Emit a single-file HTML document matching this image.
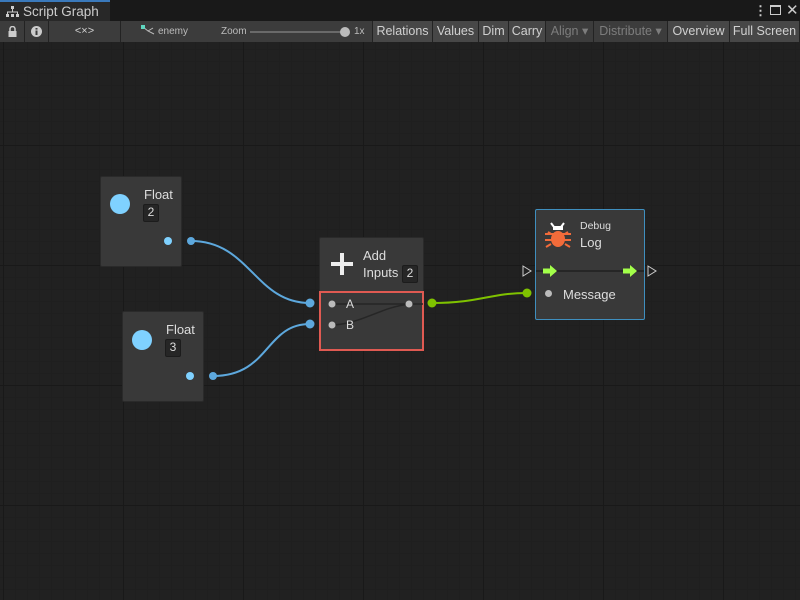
<!DOCTYPE html>
<html><head><meta charset="utf-8"><style>
*{margin:0;padding:0;box-sizing:border-box}
body{width:800px;height:600px;overflow:hidden;background:#212121;font-family:"Liberation Sans",sans-serif;position:relative;color:#ddd}
.tabbar{position:absolute;left:0;top:0;width:800px;height:21px;background:#191919}
.tab{position:absolute;left:0;top:0;width:110px;height:21px;background:#282828;border-top:2px solid #3a79bb;font-size:13.5px;color:#ccc;padding:2px 0 0 23px}
.toolbar{position:absolute;left:0;top:21px;width:800px;height:21px;background:#3c3c3c;border-bottom:1px solid #232323}
.tb{position:absolute;top:0;height:21px;border-right:1px solid #232323;font-size:12.5px;color:#d0d0d0;line-height:21px;text-align:center;background:#3c3c3c}
.tb span{position:absolute;top:0;line-height:21px}
.btn{background:#474747}
.dis{color:#7d7d7d}
.grid{position:absolute;left:0;top:42px;width:800px;height:558px;
background-image:linear-gradient(#191919 1px,transparent 1px),linear-gradient(90deg,#191919 1px,transparent 1px),linear-gradient(#1f1f1f 1px,transparent 1px),linear-gradient(90deg,#1f1f1f 1px,transparent 1px);
background-size:120px 120px,120px 120px,12px 12px,12px 12px;background-position:0 103px,3px 0,0 7px,3px 0}
.node{position:absolute;background:#393939;border:1px solid #2a2a2a;border-radius:2px}
.t{position:absolute;font-size:13px;color:#ddd}
.box{position:absolute;background:#262626;border:1px solid #1c1c1c;border-radius:2px;font-size:12px;color:#ddd;text-align:center;line-height:15px}
</style></head><body>
<div class="grid"></div>
<div class="tabbar">
<div class="tab">Script Graph</div>
<svg style="position:absolute;left:6px;top:6px" width="13" height="11"><rect x="5" y="0" width="3" height="3" fill="#ccc"/><path d="M6.5 3v3M1.5 9V6h10v3" stroke="#ccc" fill="none"/><rect x="0" y="8" width="3" height="3" fill="#ccc"/><rect x="5" y="8" width="3" height="3" fill="#ccc"/><rect x="10" y="8" width="3" height="3" fill="#ccc"/></svg>
<div style="position:absolute;left:754px;top:3px;color:#ccc;font-size:13px;font-weight:bold">⋮</div>
<div style="position:absolute;left:770px;top:5px;width:11px;height:10px;border:1.5px solid #ccc;border-top-width:2.5px"></div>
<div style="position:absolute;left:786px;top:1px;color:#ccc;font-size:15px">✕</div>
</div>
<div class="toolbar">
<div class="tb" style="left:0;width:25px"><svg width="9" height="11" style="margin-top:5px"><path d="M2 5V3a2.5 2.5 0 0 1 5 0v2" stroke="#ccc" fill="none" stroke-width="1.5"/><rect x="0.5" y="5" width="8" height="6" fill="#ccc"/></svg></div>
<div class="tb" style="left:25px;width:24px"><svg width="11" height="11" style="margin-top:5px"><circle cx="5.5" cy="5.5" r="5.5" fill="#ccc"/><rect x="4.5" y="4.5" width="2" height="4.5" fill="#3c3c3c"/><rect x="4.5" y="2" width="2" height="1.6" fill="#3c3c3c"/></svg></div>
<div class="tb" style="left:49px;width:72px;font-size:11px">&lt;×&gt;</div>
<div class="tb" style="left:121px;width:252px;text-align:left;font-size:10px;color:#bbb">
<svg style="position:absolute;left:20px;top:4px" width="14" height="12"><path d="M2 2L7 6L13 9M7 6L12 3" stroke="#bbb" fill="none"/><rect x="0" y="0" width="4" height="4" fill="#5fd6c0"/></svg>
<span style="left:37px">enemy</span><span style="left:100px">Zoom</span>
<div style="position:absolute;left:129px;top:10px;width:96px;height:2px;background:#6a6a6a"></div>
<div style="position:absolute;left:219px;top:6px;width:10px;height:10px;border-radius:50%;background:#bbb"></div>
<span style="left:233px">1x</span></div>
<div class="tb btn" style="left:373px;width:60px">Relations</div>
<div class="tb btn" style="left:433px;width:46px">Values</div>
<div class="tb btn" style="left:479px;width:30px">Dim</div>
<div class="tb btn" style="left:509px;width:37px">Carry</div>
<div class="tb dis" style="left:546px;width:48px">Align ▾</div>
<div class="tb dis" style="left:594px;width:74px">Distribute ▾</div>
<div class="tb btn" style="left:668px;width:62px">Overview</div>
<div class="tb btn" style="left:730px;width:70px">Full Screen</div>
</div>

<svg style="position:absolute;left:0;top:0" width="800" height="600">
<path d="M191 241C250 241 255 303 310 303" stroke="#5da8dd" stroke-width="2" fill="none"/>
<path d="M213 376C270 376 265 324 310 324" stroke="#5da8dd" stroke-width="2" fill="none"/>
<path d="M432 303C480 303 490 293 527 293" stroke="#7fc200" stroke-width="2" fill="none"/>
<circle cx="191" cy="241" r="4" fill="#5da8dd"/><circle cx="213" cy="376" r="4" fill="#5da8dd"/>
<circle cx="310" cy="303" r="4.5" fill="#5da8dd"/><circle cx="310" cy="324" r="4.5" fill="#5da8dd"/>
<circle cx="432" cy="303" r="4.5" fill="#7fc200"/><circle cx="527" cy="293" r="4.5" fill="#7fc200"/>
<path d="M523 266l8 5l-8 5z M648 266l8 5l-8 5z" stroke="#ccc" fill="none"/>
</svg>

<div class="node" style="left:100px;top:176px;width:82px;height:91px">
<div style="position:absolute;left:9px;top:17px;width:20px;height:20px;border-radius:50%;background:#7fd1ff"></div>
<div class="t" style="left:43px;top:10px">Float</div>
<div class="box" style="left:42px;top:27px;width:16px;height:18px">2</div>
<div style="position:absolute;left:63px;top:60px;width:8px;height:8px;border-radius:50%;background:#7fd1ff"></div>
</div>
<div class="node" style="left:122px;top:311px;width:82px;height:91px">
<div style="position:absolute;left:9px;top:18px;width:20px;height:20px;border-radius:50%;background:#7fd1ff"></div>
<div class="t" style="left:43px;top:10px">Float</div>
<div class="box" style="left:42px;top:27px;width:16px;height:18px">3</div>
<div style="position:absolute;left:63px;top:60px;width:8px;height:8px;border-radius:50%;background:#7fd1ff"></div>
</div>

<div class="node" style="left:319px;top:237px;width:105px;height:113px;border-color:#2a2a2a">
<div style="position:absolute;left:11px;top:24px;width:22px;height:4px;background:#eee"></div>
<div style="position:absolute;left:20px;top:15px;width:4px;height:22px;background:#eee"></div>
<div class="t" style="left:43px;top:10px">Add</div>
<div class="t" style="left:43px;top:27px">Inputs</div>
<div class="box" style="left:82px;top:27px;width:16px;height:18px">2</div>
<div style="position:absolute;left:-1px;top:53px;width:105px;height:60px;border:2px solid #e05a52;background:#393939"></div>
<svg style="position:absolute;left:0;top:54px" width="104" height="50"><path d="M10 12H103M10 33C40 33 60 15 90 12" stroke="#262626" stroke-width="1.5" fill="none"/>
<circle cx="12" cy="12" r="3.5" fill="#bbb"/><circle cx="12" cy="33" r="3.5" fill="#bbb"/><circle cx="89" cy="12" r="3.5" fill="#bbb"/></svg>
<div class="t" style="left:26px;top:59px;font-size:12px">A</div>
<div class="t" style="left:26px;top:80px;font-size:12px">B</div>
</div>

<div class="node" style="left:535px;top:209px;width:110px;height:111px;border:1px solid #3f8fbf">
<svg style="position:absolute;left:8px;top:10px" width="28" height="30"><path d="M7 3l3 4M20 3l-3 4" stroke="#fff" stroke-width="2"/><rect x="9" y="6" width="10" height="4" fill="#fff"/><ellipse cx="14" cy="19" rx="7" ry="8" fill="#f26b3a"/><path d="M1 14h26M1 20h26M2 27l5-3M26 27l-5-3M4 12l3 2M24 12l-3 2" stroke="#f26b3a" stroke-width="2"/></svg>
<div class="t" style="left:44px;top:10px;font-size:10.5px">Debug</div>
<div class="t" style="left:44px;top:25px">Log</div>
<div style="position:absolute;left:0;top:60px;width:108px;height:2px;background:#262626"></div>
<svg style="position:absolute;left:7px;top:55px" width="14" height="12"><path d="M0 3.5h7V0l7 6l-7 6V8.5H0z" fill="#a3ff4a"/></svg>
<svg style="position:absolute;left:87px;top:55px" width="14" height="12"><path d="M0 3.5h7V0l7 6l-7 6V8.5H0z" fill="#a3ff4a"/></svg>
<div style="position:absolute;left:9px;top:80px;width:7px;height:7px;border-radius:50%;background:#bbb"></div>
<div class="t" style="left:27px;top:77px">Message</div>
</div>
</body></html>
